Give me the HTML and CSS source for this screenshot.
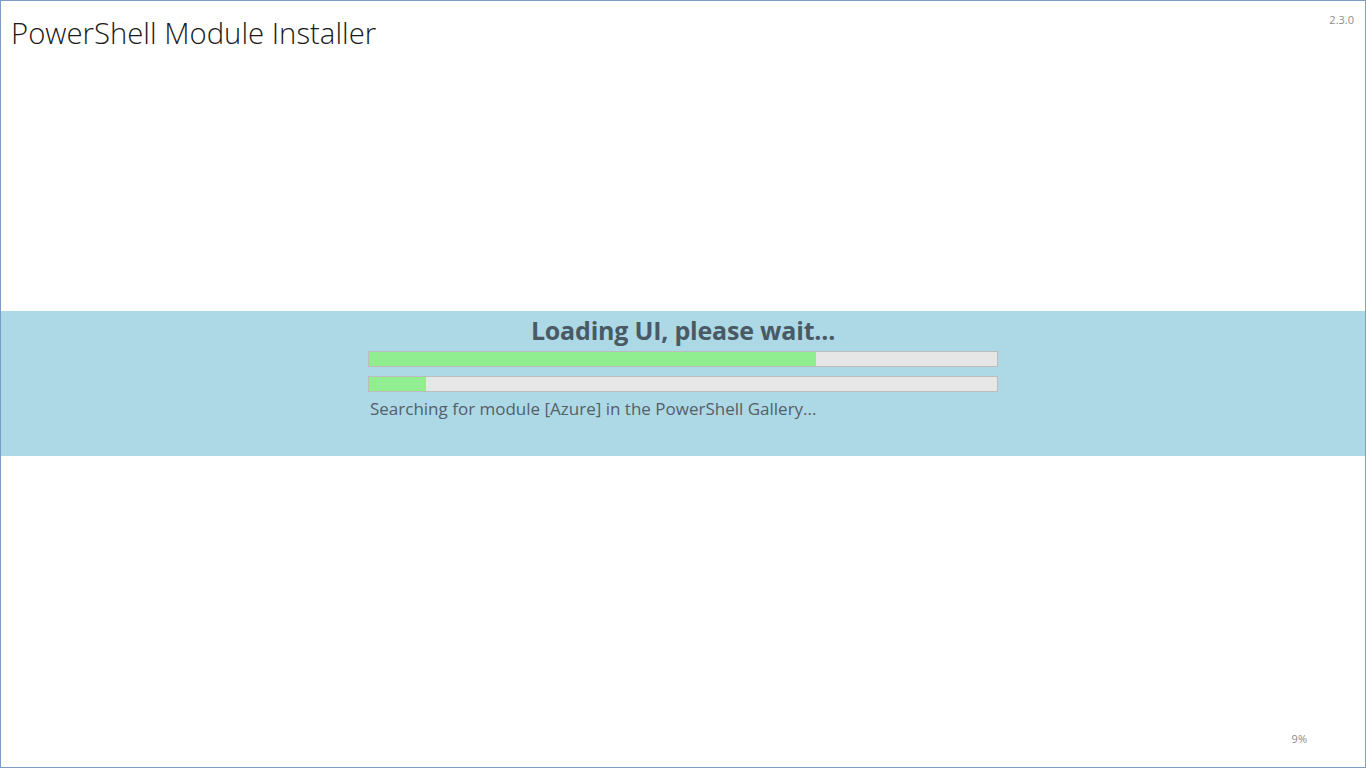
FILE: index.html
```html
<!DOCTYPE html>
<html>
<head>
<meta charset="utf-8">
<link rel="stylesheet" href="styles.css">
</head>
<body>
<div class="window">
  <header class="top">
    <h1 class="app-title">PowerShell Module Installer</h1>
    <span class="version">2.3.0</span>
  </header>
  <main class="middle">
    <section class="band">
      <div class="band-inner">
        <h2 class="loading">Loading UI, please wait...</h2>
        <div class="bar"><div class="fill" style="width:71.2%"></div></div>
        <div class="bar"><div class="fill" style="width:9%"></div></div>
        <p class="status">Searching for module [Azure] in the PowerShell Gallery...</p>
      </div>
    </section>
  </main>
  <footer class="bottom">
    <span class="percent">9%</span>
  </footer>
</div>
</body>
</html>
```
FILE: styles.css
```css
* { box-sizing: border-box; }
html, body { margin: 0; padding: 0; background: #ffffff; }
body { font-family: "Open Sans", "Noto Sans", sans-serif; }
.window {
  width: 1366px;
  height: 768px;
  border: 1px solid #7a9cc6;
  display: flex;
  flex-direction: column;
  background: #ffffff;
}
.top {
  display: flex;
  justify-content: space-between;
  align-items: flex-start;
  padding: 0 11px 0 10px;
  height: 80px;
}
.app-title {
  margin: 13px 0 0 0;
  font-weight: 300;
  font-size: 29.3px;
  line-height: 38px;
  color: #1a1a1a;
}
.version {
  margin-top: 11px;
  font-size: 11px;
  color: #8c8c8c;
}
.middle {
  flex: 1;
  display: flex;
  flex-direction: column;
  justify-content: center;
}
.band {
  background: #add8e6;
  height: 145px;
  margin-top: 4px;
  display: flex;
  justify-content: center;
}
.band-inner {
  width: 630px;
  padding-top: 3px;
}
.loading {
  margin: 0;
  text-align: center;
  font-size: 25px;
  line-height: 32px;
  font-weight: 700;
  color: #4a5a64;
  letter-spacing: -0.2px;
}
.bar {
  height: 16px;
  margin-top: 5px;
  background: #e6e6e6;
  border: 1px solid #bcbcbc;
}
.bar + .bar { margin-top: 9px; }
.fill {
  height: 100%;
  background: #90ee90;
}
.status {
  margin: 6px 0 0 2px;
  font-size: 17px;
  line-height: 22px;
  color: #555f68;
}
.bottom {
  height: 86px;
  display: flex;
  justify-content: flex-end;
  padding: 0 58px 0 0;
}
.percent {
  margin-top: 50px;
  font-size: 11px;
  color: #8c8c8c;
}
```
